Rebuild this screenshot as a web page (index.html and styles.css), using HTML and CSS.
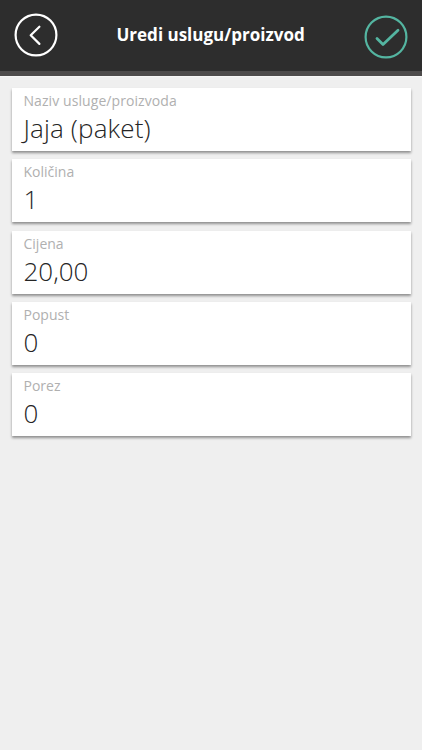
FILE: index.html
```
<!DOCTYPE html>
<html lang="hr">
<head>
<meta charset="utf-8">
<title>Uredi uslugu/proizvod</title>
<link rel="stylesheet" href="styles.css">
</head>
<body>
<header class="bar">
  <svg class="icon back" viewBox="0 0 44 44"><circle cx="22" cy="22" r="20.4"/><path d="M25.4 13.7 16.7 22.2l8.7 8.7"/></svg>
  <h1 class="title"><span>Uredi uslugu/proizvod</span></h1>
  <svg class="icon ok" viewBox="0 0 44 44"><circle cx="22" cy="22" r="20.4"/><path d="m13 23.5 6 6L34 15.3"/></svg>
</header>
<main class="form">
  <section class="field"><div class="label name-label">Naziv usluge/proizvoda</div><div class="value name-value">Jaja (paket)</div></section>
  <section class="field"><div class="label">Količina</div><div class="value">1</div></section>
  <section class="field"><div class="label">Cijena</div><div class="value">20,00</div></section>
  <section class="field"><div class="label">Popust</div><div class="value">0</div></section>
  <section class="field"><div class="label">Porez</div><div class="value">0</div></section>
</main>
</body>
</html>
```
FILE: styles.css
```
* { box-sizing: border-box; }
body {
  margin: 0;
  min-height: 750px;
  background: #efefef;
  font-family: "Open Sans", "Noto Sans", sans-serif;
}
.bar {
  display: flex;
  justify-content: space-between;
  height: 76px;
  padding: 13px 14px 0;
  background: #2d2d2d;
  border-bottom: 5px solid #4d4b4b;
  box-shadow: 0 1px 1px #f6f6f6;
}
.icon {
  width: 44px;
  height: 44px;
  fill: none;
  stroke-width: 2.2;
  stroke-linecap: round;
  stroke-linejoin: round;
}
.back { stroke: #fff; }
.ok { stroke: #54b5a1; margin-top: 2px; }
.ok path { stroke-width: 2.8; }
.title {
  margin: 0;
  font-size: 18px;
  line-height: 42px;
  font-weight: 700;
  color: #fff;
  white-space: nowrap;
}
.title span { display: block; transform: scaleX(.945); }
.form {
  display: grid;
  gap: 8.25px;
  padding: 12px 11.5px;
}
.field {
  height: 63px;
  padding: 3px 12px 0;
  background: #fff;
  box-shadow: 0 1.5px 2.5px rgba(0, 0, 0, .4);
}
.label {
  width: max-content;
  font-size: 14px;
  line-height: 20px;
  color: #b0b0b0;
  transform-origin: left;
}
.name-label { letter-spacing: .08px; }
.value {
  width: max-content;
  font-size: 26px;
  line-height: 34px;
  font-weight: 300;
  color: #252525;
}
.name-value { letter-spacing: .15px; }
```
